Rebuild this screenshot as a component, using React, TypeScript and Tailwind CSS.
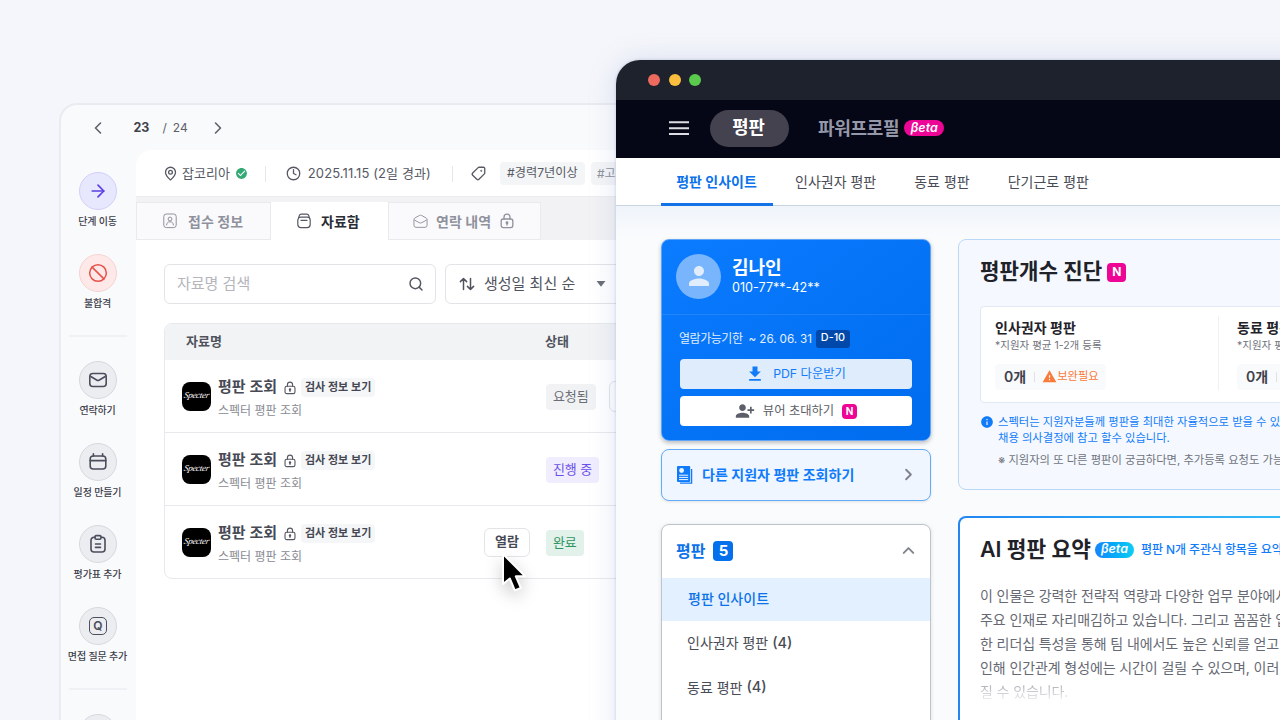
import type { ReactNode } from "react";
import {
  ArrowRight,
  Ban,
  ChevronLeft,
  ChevronRight,
  ChevronUp,
  Clock,
  MapPin,
  Search,
  Tag,
} from "lucide-react";
import {
  MdCheckCircle,
  MdDownload,
  MdInfo,
  MdPerson,
  MdPersonAddAlt1,
  MdWarning,
} from "react-icons/md";

const LockIcon = ({ className = "" }) => (
  <svg viewBox="0 0 14 16" fill="none" stroke="currentColor" strokeWidth="1.3" className={className}>
    <rect x="1.2" y="6" width="11.6" height="8.6" rx="2" />
    <path d="M4 6V4.2a3 3 0 0 1 6 0V6M7 10.2v1.8" strokeLinecap="round" />
    <circle cx="7" cy="9.8" r=".8" fill="currentColor" />
  </svg>
);

const MailIcon = () => (
  <svg viewBox="0 0 20 20" fill="none" stroke="currentColor" strokeWidth="1.6" className="size-5">
    <rect x="1.8" y="3.5" width="16.4" height="13" rx="3" />
    <path d="M2.4 6.2 8.6 10a2.8 2.8 0 0 0 2.8 0l6.2-3.8" />
  </svg>
);

const CalendarIcon = () => (
  <svg viewBox="0 0 20 20" fill="none" stroke="currentColor" strokeWidth="1.6" strokeLinecap="round" className="size-5">
    <rect x="2.2" y="4" width="15.6" height="13" rx="3" />
    <path d="M2.2 8.6h15.6M5.4 1.8V4M14.6 1.8V4" />
  </svg>
);

const ClipboardIcon = () => (
  <svg viewBox="0 0 20 20" fill="none" stroke="currentColor" strokeWidth="1.6" strokeLinecap="round" className="size-5">
    <path d="M7 3.2H6a3 3 0 0 0-3 3V15a3 3 0 0 0 3 3h8a3 3 0 0 0 3-3V6.2a3 3 0 0 0-3-3h-1" />
    <rect x="7" y="1.6" width="6" height="3.6" rx="1.2" />
    <path d="M7.5 10h5M7.5 13.4h5" />
  </svg>
);

const QuestionIcon = () => (
  <span className="flex size-[18px] items-center justify-center rounded-[5px] border-[1.5px] border-current text-[12px] font-semibold leading-none">
    Q
  </span>
);

const ProfileIcon = () => (
  <svg viewBox="0 0 14 16" fill="none" stroke="currentColor" strokeWidth="1" className="h-4 w-3.5">
    <rect x=".8" y="1" width="12.4" height="13.6" rx="2.5" />
    <circle cx="7" cy="6" r="1.9" />
    <path d="M3.6 12c0-2.200 1.300-3.200 3.400-3.200s3.400 1 3.400 3.200" strokeLinecap="round" />
  </svg>
);

const ArchiveIcon = () => (
  <svg viewBox="0 0 14 16" fill="none" stroke="currentColor" strokeWidth="1.2" strokeLinecap="round" className="h-4 w-3.5">
    <rect x=".8" y="4.2" width="12.4" height="10.4" rx="3" />
    <path d="M1.6 4.800 2.200 2.800Q2.700 1.200 4.300 1.200h5.400q1.600 0 2.100 1.600l.6 2M4 7.300h6" />
  </svg>
);

const OpenMailIcon = () => (
  <svg viewBox="0 0 16 16" fill="none" stroke="currentColor" strokeWidth="1" className="size-[15px]">
    <path d="M1 6q0-1.200 1-1.800l4.800-2.600q1.200-.6 2.400 0L14 4.200q1 .6 1 1.800v6q0 2.200-2.200 2.200H3.200Q1 14.200 1 12z" />
    <path d="m1.200 6.200 5.300 3q1.500.8 3 0l5.300-3" />
  </svg>
);

const SortIcon = () => (
  <svg viewBox="0 0 16 16" fill="none" stroke="currentColor" strokeWidth="1.5" strokeLinecap="round" strokeLinejoin="round" className="size-4">
    <path d="M4.500 13.500V2.500M1.400 5.600l3.100-3.100 3.100 3.100M11.500 2.500v11M8.400 10.400l3.100 3.100 3.100-3.100" />
  </svg>
);

const ReportIcon = () => (
  <svg viewBox="0 0 16 18" className="h-[18px] w-4">
    <path d="M14.600 3V17.200H3" fill="none" stroke="#0f7bfb" strokeWidth="1.3" />
    <rect width="13.200" height="16" rx="1" fill="#0f7bfb" />
    <circle cx="4.600" cy="4.500" r="2.400" fill="#f0f6ff" />
    <path d="M2 9.200h9.200M2 11.400h9.200M2 13.600h9.200" stroke="#f0f6ff" strokeWidth="1" />
  </svg>
);

const Cursor = () => (
  <svg viewBox="0 0 26 42" className="absolute left-[17px] top-[24px] z-10 h-[42px] w-[26px] drop-shadow-[0_6px_8px_rgba(0,0,0,0.2)]">
    <path d="M2 2v30l6.800-5.500 5 11.800 6-2.500-5-11.500h9.400z" fill="#000" stroke="#fff" strokeWidth="2" strokeLinejoin="round" />
  </svg>
);

const sideActions = [
  { label: "연락하기", icon: <MailIcon /> },
  { label: "일정 만들기", icon: <CalendarIcon /> },
  { label: "평가표 추가", icon: <ClipboardIcon /> },
  { label: "면접 질문 추가", icon: <QuestionIcon /> },
];

const rows = [
  { status: "요청됨", color: "bg-[#f1f2f4] text-[#6b6e77]", next: true, open: false },
  { status: "진행 중", color: "bg-[#efedfe] text-[#6a50ea]", next: false, open: false },
  { status: "완료", color: "bg-[#e2f1ea] text-[#2f9462]", next: false, open: true },
];

const summary = [
  "이 인물은 강력한 전략적 역량과 다양한 업무 분야에서",
  "주요 인재로 자리매김하고 있습니다. 그리고 꼼꼼한 업",
  "한 리더십 특성을 통해 팀 내에서도 높은 신뢰를 얻고",
  "인해 인간관계 형성에는 시간이 걸릴 수 있으며, 이러",
];

const SideItem = ({ label, icon, tone }: { label: string; icon: ReactNode; tone: string }) => (
  <div className="flex flex-col items-center">
    <div className={`flex size-[38px] shrink-0 items-center justify-center rounded-full border ${tone}`}>
      {icon}
    </div>
    <span className="mt-1 h-[15px] whitespace-nowrap pr-px text-[10px] font-medium leading-[14px] tracking-[-0.15px] text-[#3d404a]">
      {label}
    </span>
  </div>
);

const NewBadge = ({ className = "" }) => (
  <span className={`flex items-center justify-center bg-[#ee0595] font-bold leading-none text-white ${className}`}>
    N
  </span>
);

const BetaBadge = ({ className = "" }) => (
  <span className={`flex h-4 items-center justify-center rounded-full text-[12.5px] font-semibold italic leading-none text-white ${className}`}>
    βeta
  </span>
);

const ApplicantWindow = () => (
  <div className="absolute left-[59px] top-[103px] flex h-[640px] w-[620px] flex-col overflow-hidden rounded-tl-[18px] border-l-2 border-t-2 border-[#e8ebf0] bg-[#f9fafc]">
    <div className="flex h-[45px] shrink-0 items-center pl-[27px] text-[12px] text-[#5d606a]">
      <ChevronLeft className="size-5" strokeWidth={1.9} />
      <span className="ml-[25.5px] pt-0.5 text-[12.5px] font-bold text-[#40434c]">23</span>
      <span className="ml-[13px]">/</span>
      <span className="ml-1.5">24</span>
      <ChevronRight className="ml-[20px] size-5" strokeWidth={1.9} />
    </div>
    <div className="flex min-h-0 flex-1">
      <div className="flex w-[75px] shrink-0 flex-col items-center gap-[25px] pr-px pt-[22px]">
        <SideItem
          label="단계 이동"
          tone="border-[#d3d0fb] bg-[#e7e7fe] text-[#5b3fe4]"
          icon={<ArrowRight className="size-5" strokeWidth={2} />}
        />
        <SideItem
          label="불합격"
          tone="border-[#f6d3d3] bg-[#ffe8e8] text-[#e5534b]"
          icon={<Ban className="size-5" strokeWidth={1.8} />}
        />
        <div className="-my-px h-0.5 w-[58px] shrink-0 bg-[#f0f1f4]" />
        {sideActions.map((a) => (
          <SideItem key={a.label} {...a} tone="border-[#d6d9dd] bg-[#ebedf0] text-[#4b4e5c]" />
        ))}
        <div className="-my-px h-0.5 w-[58px] shrink-0 bg-[#f0f1f4]" />
        <SideItem label="" icon={null} tone="border-[#d6d9dd] bg-[#ebedf0]" />
      </div>

      <div className="flex min-w-0 flex-1 flex-col rounded-tl-[16px] bg-white">
        <div className="flex h-[47px] shrink-0 items-center whitespace-nowrap border-b border-[#ececef] pl-[27px] pt-px text-[13px] text-[#565963]">
          <MapPin className="size-[15px]" strokeWidth={2.1} />
          <span className="ml-1">잡코리아</span>
          <MdCheckCircle className="ml-[5px] size-[13px] text-[#33aa75]" />
          <span className="ml-[17px] h-4 w-px bg-[#e6e7ea]" />
          <Clock className="ml-5 size-[15px]" strokeWidth={2.1} />
          <span className="ml-[7px] tracking-[0.1px]">2025.11.15 (2일 경과)</span>
          <span className="ml-[21px] h-4 w-px bg-[#e6e7ea]" />
          <Tag className="ml-[18px] size-[15px] rotate-90" strokeWidth={2.1} />
          <span className="ml-[14px] flex h-[23px] w-[85px] items-center justify-center rounded bg-[#f4f5f6] text-[12.2px]">#경력7년이상</span>
          <span className="ml-1.5 flex h-[23px] items-center rounded bg-[#f4f5f6] px-1.5 text-[12px] text-[#8e919a]">#고</span>
        </div>
        <div className="flex h-[43px] shrink-0 bg-[#f2f2f4] pt-[5px] text-[14px] font-semibold">
          <div className="flex w-[135px] items-center gap-[11px] border border-[#e9eaed] bg-[#fafafc] pl-[26px] text-[#8f929c]">
            <ProfileIcon />
            접수 정보
          </div>
          <div className="flex w-[117px] items-center gap-[10px] bg-white pl-[26px] font-bold text-[#2b2d36]">
            <span className="text-[#555862]"><ArchiveIcon /></span>
            자료함
          </div>
          <div className="flex w-[153px] items-center border border-[#e9eaed] bg-[#fafafc] pl-6 text-[#8f929c]">
            <OpenMailIcon />
            <span className="ml-2">연락 내역</span>
            <LockIcon className="ml-[9px] h-4 w-3.5" />
          </div>
        </div>
        <div className="flex flex-col pl-7 pt-6">
          <div className="flex gap-[9px]">
            <div className="flex h-[40px] w-[272px] items-center justify-between rounded-md border border-[#e3e4e8] pl-3 pr-[11px] text-[15px] text-[#b4b6bc]">
              자료명 검색
              <Search className="size-4 text-[#555862]" strokeWidth={2.2} />
            </div>
            <div className="flex h-[40px] w-[200px] items-center rounded-md border border-[#e3e4e8] pl-[13px] text-[15px] text-[#50535d]">
              <SortIcon />
              <span className="ml-[9px]">생성일 최신 순</span>
              <svg viewBox="0 0 10 6" className="ml-[21px] h-1.5 w-2.5" fill="#6b6e77">
                <path d="M.5 0h9L5 5.800z" />
              </svg>
            </div>
          </div>
          <div className="mt-[19px] w-[500px] rounded-lg border border-[#e8e9ec]">
            <div className="flex h-[36px] items-center rounded-t-lg bg-[#f2f3f5] text-[13px] font-semibold text-[#50535d]">
              <span className="w-[380px] pl-[21px]">자료명</span>
              상태
            </div>
            {rows.map((row) => (
              <div key={row.status} className="flex h-[73px] items-center border-b border-[#e8e9ec] pl-[17px] last:h-[72px] last:border-b-0">
                <div className="flex size-[29px] items-center justify-center rounded-lg bg-black font-['Liberation_Serif',serif] text-[9px] italic tracking-[-0.3px] text-white">
                  <span className="-skew-x-12">Specter</span>
                </div>
                <div className="ml-2 flex w-[265px] flex-col whitespace-nowrap pt-1">
                  <div className="flex h-[22px] items-center">
                    <span className="-ml-px text-[15px] font-semibold text-[#474a55]">평판 조회</span>
                    <LockIcon className="ml-[7px] h-[14px] w-[12px] text-[#555862]" />
                    <span className="ml-[5px] flex h-[19px] items-center rounded bg-[#f5f6f8] px-1 text-[11px] font-semibold text-[#454853]">
                      검사 정보 보기
                    </span>
                  </div>
                  <span className="mt-[3px] -ml-px text-[12px] leading-[18px] text-[#888b93]">스펙터 평판 조회</span>
                </div>
                <div className="relative w-[62px]">
                  {row.open && (
                    <>
                      <button className="flex h-[29px] w-[46px] items-center justify-center rounded-md border border-[#e3e4e8] bg-white text-[13px] font-semibold text-[#474a55]">
                        열람
                      </button>
                      <Cursor />
                    </>
                  )}
                </div>
                <span className={`mt-px flex h-[26px] items-center rounded px-[7px] text-[13px] tracking-[-0.1px] ${row.color}`}>{row.status}</span>
                {row.next && <span className="ml-[13px] h-[31px] w-[46px] rounded-md border border-[#e3e4e8]" />}
              </div>
            ))}
          </div>
        </div>
      </div>
    </div>
  </div>
);

const ProfileCard = () => (
  <div className="flex h-[202px] shrink-0 flex-col rounded-lg border border-[#5ea4f7] bg-linear-to-br from-[#0b7bff] to-[#006cee] text-white shadow-[0_2px_4px_rgba(0,0,0,0.25)]">
    <div className="flex h-[75px] items-center border-b border-white/10 pb-0.5 pl-3.5">
      <div className="flex size-[45px] items-center justify-center rounded-full bg-[#79b5fd]">
        <MdPerson className="size-[30px] text-[#e1edfd]" />
      </div>
      <div className="ml-[11px] flex flex-col">
        <span className="text-[18px] font-semibold leading-6">김나인</span>
        <span className="-mt-px text-[12.6px] leading-[18px]">010-77**-42**</span>
      </div>
    </div>
    <div className="flex flex-col pl-[18px] pr-[18px] pt-[14px]">
      <div className="flex h-[19px] items-center whitespace-nowrap text-[12px]">
        <span className="-ml-px tracking-[-0.45px] text-[#e3effe]">열람가능기한</span>
        <span className="ml-1.5 pt-0.5 text-[11.7px] tracking-[-0.1px] text-[#e3effe]">~ 26. 06. 31</span>
        <span className="ml-1 flex h-[18px] items-center rounded-[3px] bg-[#0049ab] px-[5px] text-[10.8px] font-medium">D-10</span>
      </div>
      <button className="mt-[11px] flex h-[30px] items-center justify-center rounded bg-[#deecfc] pr-px text-[12.3px] text-[#127cf8]">
        <MdDownload className="mr-2 size-5" />
        PDF 다운받기
      </button>
      <button className="mt-[7px] flex h-[30px] items-center justify-center rounded bg-white text-[12.3px] text-[#5c5f69]">
        <MdPersonAddAlt1 className="mr-2 size-5" />
        뷰어 초대하기
        <NewBadge className="ml-2 size-[15px] rounded text-[10px]" />
      </button>
    </div>
  </div>
);

const ReputationMenu = () => (
  <div className="mt-[23px] h-[300px] overflow-hidden rounded-lg border border-[#bfc4cc] bg-white text-[14px] text-[#494c56] shadow-[0_1px_4px_rgba(0,0,0,0.12)]">
    <div className="flex h-[53px] items-center pb-0.5 pl-3.5 pr-3 text-[16px] font-bold text-[#0b72ea]">
      평판
      <span className="ml-2 flex size-5 items-center justify-center rounded bg-[#0570ec] text-[15px] leading-none text-white">5</span>
      <ChevronUp className="ml-auto size-[19px] text-[#80838c]" strokeWidth={2.4} />
    </div>
    <div className="flex h-[43px] items-center bg-[#e3f0ff] pb-0.5 pl-[26px] font-medium text-[#0b72ea]">평판 인사이트</div>
    <div className="flex h-[44px] items-center pb-px pl-[25px]">
      인사권자 평판&nbsp;<span className="text-[14.5px] font-medium">(4)</span>
    </div>
    <div className="flex h-[44px] items-center pl-[25px]">
      동료 평판&nbsp;<span className="text-[14.5px] font-medium">(4)</span>
    </div>
  </div>
);

const CountBlock = ({ title }: { title: string }) => (
  <div className="flex flex-col">
    <span className="text-[14px] font-semibold leading-5 text-[#1f2229]">{title}</span>
    <span className="text-[10.5px] leading-[15px] text-[#70737c]">*지원자 평균 1-2개 등록</span>
    <div className="mt-[11px] flex h-[26px] w-[111px] items-center rounded bg-[#f9fafb] pb-px pl-[9px]">
      <span className="text-[14px] font-semibold text-[#3f424c]">0개</span>
      <span className="ml-2 h-2.5 w-px bg-[#dfe1e5]" />
      <MdWarning className="ml-[7px] size-[15px] text-[#f97b3b]" />
      <span className="text-[11.3px] text-[#f97b3b]">보완필요</span>
    </div>
  </div>
);

const CountCard = () => (
  <div className="h-[251px] rounded-lg border border-[#b9d7f6] bg-[#f5f9ff] pl-[21px] pt-4">
    <div className="flex h-8 items-center text-[21.2px] font-semibold text-[#1f2229]">
      평판개수 진단
      <NewBadge className="ml-[5px] size-[19px] rounded text-[12px]" />
    </div>
    <div className="mt-[18px] flex h-[97px] rounded border border-[#dfe8f3] bg-white pl-3.5 pt-[11px]">
      <div className="w-[223px]">
        <CountBlock title="인사권자 평판" />
      </div>
      <div className="-mt-0.5 h-[74px] border-l border-[#f0f1f3] pl-[18px] pt-0.5">
        <CountBlock title="동료 평판" />
      </div>
    </div>
    <div className="mt-[11px] flex text-[11.3px] leading-4 text-[#127cf8]">
      <MdInfo className="mt-px size-[14px] shrink-0" />
      <div className="ml-1 whitespace-nowrap">
        <p>스펙터는 지원자분들께 평판을 최대한 자율적으로 받을 수 있</p>
        <p>채용 의사결정에 참고 할수 있습니다.</p>
        <p className="mt-[6px] text-[#70737c]">※ 지원자의 또 다른 평판이 궁금하다면, 추가등록 요청도 가능</p>
      </div>
    </div>
  </div>
);

const SummaryCard = () => (
  <div className="mt-[26px] rounded-tl-lg bg-linear-to-r from-[#2385f2] to-[#35c8f8] pl-0.5 pt-0.5">
    <div className="h-[300px] rounded-tl-md bg-white pl-5 pt-[15px]">
      <div className="flex h-8 items-center whitespace-nowrap pt-px text-[21.4px] font-semibold text-[#1f2229]">
        AI 평판 요약
        <BetaBadge className="ml-1 w-[39px] bg-linear-to-r from-[#1685fb] to-[#10cdf2]" />
        <span className="ml-[7px] text-[12px] font-medium tracking-[-0.1px] text-[#127cf8]">평판 N개 주관식 항목을 요약</span>
      </div>
      <div className="mt-[19px] whitespace-nowrap text-[14px] leading-6 tracking-[-0.1px] text-[#666973]">
        {summary.map((line) => (
          <p key={line}>{line}</p>
        ))}
        <p className="bg-linear-to-b from-[#999ca3] to-white bg-clip-text text-transparent">질 수 있습니다.</p>
      </div>
    </div>
  </div>
);

const InsightWindow = () => (
  <div className="absolute left-[616px] top-[60px] flex h-[700px] w-[700px] flex-col overflow-hidden rounded-tl-[24px] bg-[#fafbfd] shadow-[0_0_3px_rgba(120,135,175,0.4),0_0_28px_rgba(120,140,200,0.22)]">
    <div className="flex h-10 shrink-0 items-center gap-[8.6px] bg-[#1d222c] pl-8">
      <span className="size-3 rounded-full bg-[#ed6a5e]" />
      <span className="size-3 rounded-full bg-[#fbbe3f]" />
      <span className="size-3 rounded-full bg-[#5acb4d]" />
    </div>
    <div className="flex h-[58px] shrink-0 items-center bg-[#050616] pb-0.5 pl-[53px] text-[18px] font-semibold">
      <svg viewBox="0 0 20 14" className="h-3.5 w-5 text-[#dcdde3]" stroke="currentColor" strokeWidth="2">
        <path d="M0 1.300h20M0 7.300h20M0 13h20" />
      </svg>
      <span className="ml-[21px] flex h-[37px] w-[79px] items-center justify-center rounded-full bg-[#43424e] pr-0.5 pt-px text-[17.8px] text-white">평판</span>
      <span className="ml-[29px] tracking-[-0.3px] text-[#9598a8]">파워프로필</span>
      <BetaBadge className="ml-[5px] w-10 bg-[#ed0595]" />
    </div>
    <div className="flex h-12 shrink-0 items-stretch gap-[38px] border-b border-[#c9d5e3] bg-white pl-[45px] text-[14px] text-[#494c56]">
      <span className="-mb-px -mr-[16px] flex w-[112px] items-center justify-center border-b-3 border-[#1373e6] pr-px pt-0.5 font-bold text-[#0b72ea]">평판 인사이트</span>
      <span className="flex items-center">인사권자 평판</span>
      <span className="flex items-center">동료 평판</span>
      <span className="flex items-center">단기근로 평판</span>
    </div>
    <div className="flex flex-1 gap-[27px] bg-linear-to-b from-[#eff4fb] to-[#fafbfd] to-5% pl-[45px] pt-[33px]">
      <div className="flex w-[270px] shrink-0 flex-col">
        <ProfileCard />
        <div className="mt-2 flex h-[52px] shrink-0 items-center rounded-lg border border-[#64abf7] bg-[#f0f6ff] pb-px pl-[15px] pr-3 text-[14px] font-semibold text-[#0f7bfb] shadow-[0_1px_3px_rgba(0,0,0,0.1)]">
          <ReportIcon />
          <span className="ml-[9px]">다른 지원자 평판 조회하기</span>
          <ChevronRight className="ml-auto size-[19px] text-[#80838c]" strokeWidth={2.4} />
        </div>
        <ReputationMenu />
      </div>
      <div className="w-[400px] shrink-0">
        <CountCard />
        <SummaryCard />
      </div>
    </div>
  </div>
);

const App = () => {
  return (
    <div className="relative h-[720px] w-[1280px] overflow-hidden bg-[#f5f6fb] font-[Inter,'Noto_Sans_CJK_KR',sans-serif]">
      <ApplicantWindow />
      <InsightWindow />
    </div>
  );
};

export default App;
